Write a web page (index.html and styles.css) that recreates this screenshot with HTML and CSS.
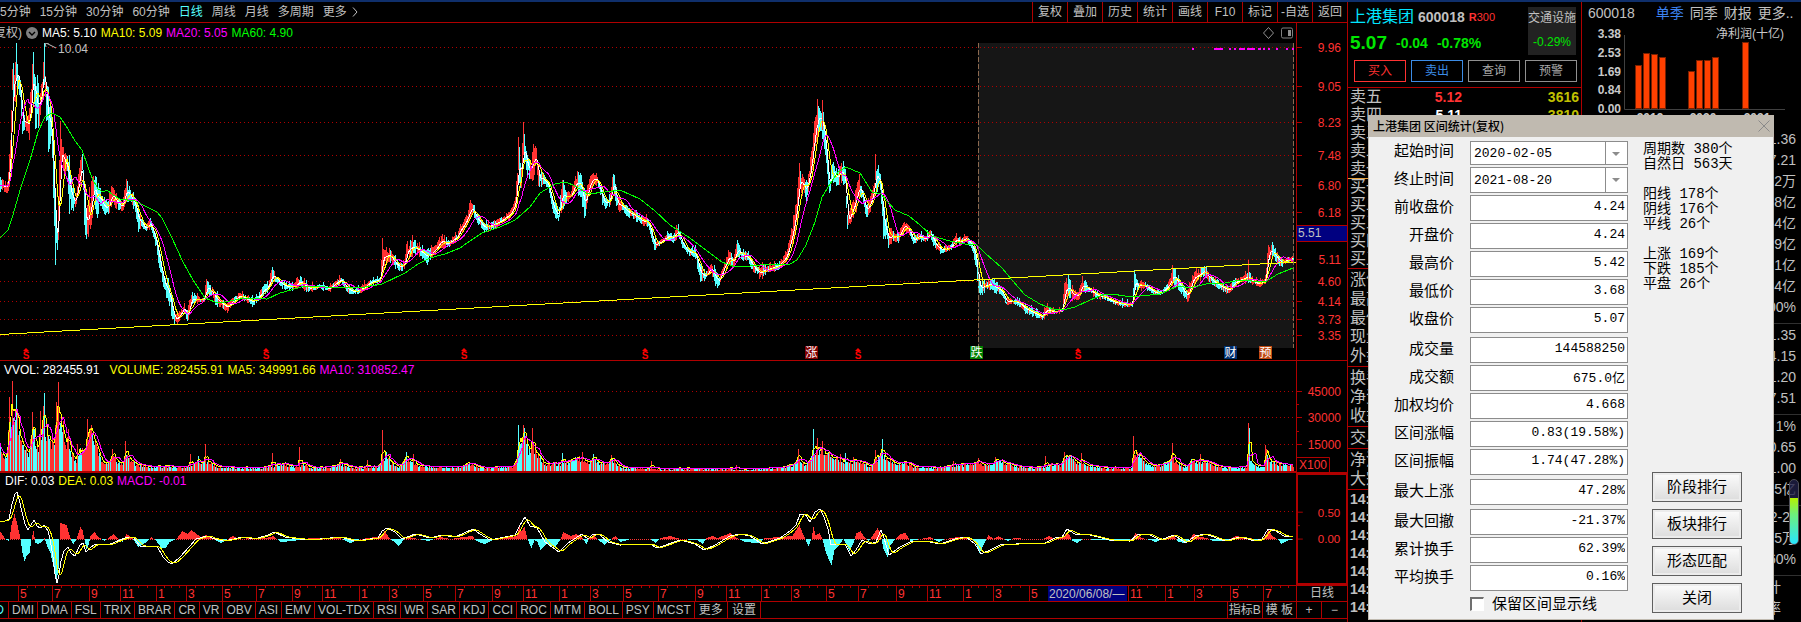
FILE: index.html
```html
<!DOCTYPE html>
<html lang="zh-CN">
  <head>
    <meta charset="UTF-8" />
    <meta name="viewport" content="width=device-width, initial-scale=1.0" />
    <title>上港集团 600018</title>
    <link rel="stylesheet" href="styles.css">
  </head>
  <body>
    <div class="app">
      <!-- Left: charts -->
      <main class="charts">
        <div class="toolbar">
          <nav class="periods">
            <a href="#">5分钟</a>
            <a href="#">15分钟</a>
            <a href="#">30分钟</a>
            <a href="#">60分钟</a>
            <a href="#" class="active">日线</a>
            <a href="#">周线</a>
            <a href="#">月线</a>
            <a href="#">多周期</a>
            <a href="#">更多</a>
            <svg width="6" height="10" viewBox="0 0 6 10"><path d="M1 0.5L5 5L1 9.5" fill="none" stroke="#c0c0c0" /></svg>
          </nav>
          <div class="actions">
            <button>复权</button>
            <button>叠加</button>
            <button>历史</button>
            <button>统计</button>
            <button>画线</button>
            <button>F10</button>
            <button>标记</button>
            <button>-自选</button>
            <button>返回</button>
          </div>
        </div>

        <section class="panel">
          <div class="plot">
            <div class="legend price-legend">
              <span class="cut">复权)</span>
              <svg class="chevron" width="12" height="12" viewBox="0 0 12 12"><circle cx="6" cy="6" r="6" fill="#808080" /><path d="M3 5L6 8L9 5" fill="none" stroke="#000" stroke-width="1.4" /></svg>
              <span class="white">MA5: 5.10</span>
              <span class="yellow">MA10: 5.09</span>
              <span class="magenta">MA20: 5.05</span>
              <span class="green">MA60: 4.90</span>
              <svg class="tools" width="30" height="12" viewBox="0 0 30 12"><path d="M5.500 0.500L10.500 6L5.500 11.500L0.500 6Z" fill="none" stroke="#909090" /><rect x="18.500" y="1" width="11" height="10" rx="1.500" fill="none" stroke="#808080" /><rect x="25" y="3" width="3" height="6" fill="#909090" /></svg>
            </div>
            <svg id="price" class="price-svg" viewBox="0 43 1296 317" preserveAspectRatio="none"></svg>
          </div>
          <svg class="axis axis-price" viewBox="1297 23 50 337" id="priceAxis"></svg>
        </section>

        <section class="panel">
          <div class="plot">
            <div class="legend vol-legend">
              <span class="white wide">VVOL: 282455.91</span>
              <span class="yellow">VOLUME: 282455.91</span>
              <span class="yellow">MA5: 349991.66</span>
              <span class="magenta">MA10: 310852.47</span>
            </div>
            <svg id="volume" class="vol-svg" viewBox="0 379 1296 93" preserveAspectRatio="none"></svg>
          </div>
          <svg class="axis axis-vol" viewBox="1297 361 50 111" id="volAxis"></svg>
        </section>

        <section class="panel">
          <div class="plot">
            <div class="legend macd-legend">
              <span class="white">DIF: 0.03</span>
              <span class="yellow">DEA: 0.03</span>
              <span class="magenta">MACD: -0.01</span>
            </div>
            <svg id="macd" class="macd-svg" viewBox="0 489 1296 96" preserveAspectRatio="none"></svg>
          </div>
          <svg class="axis axis-macd" viewBox="1297 473 50 112" id="macdAxis"></svg>
        </section>

        <div class="dates">
          <svg id="dates" class="dates-svg" viewBox="0 586 1296 15" preserveAspectRatio="none"></svg>
          <button class="cycle">日线</button>
        </div>

        <div class="indicators">
          <button class="first active">MACD</button>
          <button>DMI</button>
          <button>DMA</button>
          <button>FSL</button>
          <button>TRIX</button>
          <button>BRAR</button>
          <button>CR</button>
          <button>VR</button>
          <button>OBV</button>
          <button>ASI</button>
          <button>EMV</button>
          <button>VOL-TDX</button>
          <button>RSI</button>
          <button>WR</button>
          <button>SAR</button>
          <button>KDJ</button>
          <button>CCI</button>
          <button>ROC</button>
          <button>MTM</button>
          <button>BOLL</button>
          <button>PSY</button>
          <button>MCST</button>
          <button class="more">更多</button>
          <button class="more">设置</button>
          <button class="push">指标B</button>
          <button>模 板</button>
          <button class="zoom">+</button>
          <button class="zoom">−</button>
        </div>
      </main>

      <!-- Middle: quote -->
      <aside class="quote">
        <div class="quote-head">
          <div>
            <div class="name-row">
              <span class="name">上港集团</span>
              <b>600018</b>
              <span class="tag"><b>R</b>300</span>
            </div>
            <div class="price-row">
              <span class="last">5.07</span>
              <span>-0.04</span>
              <span>-0.78%</span>
            </div>
          </div>
          <div class="sector">
            <span>交通设施</span>
            <span class="down">-0.29%</span>
          </div>
        </div>
        <div class="trade">
          <button class="buy">买入</button>
          <button class="sell">卖出</button>
          <button>查询</button>
          <button>预警</button>
        </div>
        <table class="book">
          <tbody>
            <tr><th>卖五</th><td class="up">5.12</td><td class="qty">3616</td></tr>
            <tr><th>卖四</th><td>5.11</td><td class="qty">3810</td></tr>
            <tr><th>卖三</th><td></td><td></td></tr>
            <tr><th>卖二</th><td></td><td></td></tr>
            <tr><th>卖一</th><td></td><td></td></tr>
          </tbody>
          <tbody class="bids">
            <tr><th>买一</th><td></td><td></td></tr>
            <tr><th>买二</th><td></td><td></td></tr>
            <tr><th>买三</th><td></td><td></td></tr>
            <tr><th>买四</th><td></td><td></td></tr>
            <tr><th>买五</th><td></td><td></td></tr>
          </tbody>
        </table>
        <ul class="facts">
          <li>涨停</li>
          <li>最高</li>
          <li>最低</li>
          <li>现量</li>
          <li>外盘</li>
        </ul>
        <ul class="facts">
          <li>换手</li>
          <li>净资</li>
          <li>收益</li>
        </ul>
        <ul class="facts">
          <li>交易</li>
        </ul>
        <ul class="facts">
          <li>净流</li>
          <li>大宗</li>
        </ul>
        <ul class="ticks">
          <li>14:5</li>
          <li>14:5</li>
          <li>14:5</li>
          <li>14:5</li>
          <li>14:5</li>
          <li>14:5</li>
          <li>14:5</li>
        </ul>
      </aside>

      <!-- Right: financials -->
      <aside class="finance">
        <div class="finance-tabs">
          <span>600018</span>
          <a href="#" class="active">单季</a>
          <a href="#">同季</a>
          <a href="#">财报</a>
          <a href="#">更多..</a>
        </div>
        <svg class="profit" viewBox="1582 24 219 104">
          <g fill="#c8c8c8" font-size="12" font-weight="bold" text-anchor="end">
            <text x="1621" y="38">3.38</text>
            <text x="1621" y="57">2.53</text>
            <text x="1621" y="76">1.69</text>
            <text x="1621" y="94">0.84</text>
            <text x="1621" y="113">0.00</text>
          </g>
          <text x="1784" y="38" fill="#c8c8c8" font-size="12" text-anchor="end">净利润(十亿)</text>
          <path d="M1624.500 35V109.500H1785" fill="none" stroke="#404040" />
          <g fill="#ff4000" stroke="#7a2000" stroke-width="1">
            <rect x="1635.500" y="65.500" width="6" height="43" />
            <rect x="1643.500" y="53.500" width="6" height="55" />
            <rect x="1651.500" y="54.500" width="6" height="54" />
            <rect x="1659.500" y="57.500" width="6" height="51" />
            <rect x="1688.500" y="71.500" width="6" height="37" />
            <rect x="1696.500" y="60.500" width="6" height="48" />
            <rect x="1704.500" y="60.500" width="6" height="48" />
            <rect x="1712.500" y="57.500" width="6" height="51" />
            <rect x="1742.500" y="42.500" width="6" height="66" />
          </g>
          <g fill="#c8c8c8" font-size="12" font-weight="bold" text-anchor="middle">
            <text x="1650" y="122">2019</text>
            <text x="1703" y="122">2020</text>
            <text x="1757" y="122">2021</text>
          </g>
        </svg>
        <ul class="values">
          <li>1.36</li>
          <li>7.21</li>
          <li>2万</li>
          <li>8亿</li>
          <li>4亿</li>
          <li>9亿</li>
          <li>1亿</li>
          <li>4亿</li>
          <li>00%</li>
        </ul>
        <ul class="values">
          <li>1.35</li>
          <li>4.15</li>
          <li>1.20</li>
          <li>7.51</li>
        </ul>
        <ul class="values">
          <li>1%</li>
          <li>0.65</li>
          <li>1.00</li>
          <li>5亿</li>
        </ul>
        <ul class="values">
          <li class="inset">2-2</li>
          <li>5万</li>
          <li>60%</li>
        </ul>
        <ul class="values last-values">
          <li>计</li>
          <li>率</li>
        </ul>
        <div class="meter"></div>
      </aside>

      <!-- Interval statistics window -->
      <form class="dialog">
        <header class="dialog-title">
          <span>上港集团 区间统计(复权)</span>
          <button type="button" aria-label="关闭窗口"><svg width="12" height="12" viewBox="0 0 12 12"><path d="M0.500 0.500L11.500 11.500M11.500 0.500L0.500 11.500" stroke="#8a8a8a" fill="none" /></svg></button>
        </header>
        <div class="dialog-body">
          <div class="fields">
            <div class="group">
              <div class="field date"><label for="f1">起始时间</label><div class="combo"><select id="f1"><option>2020-02-05</option></select></div></div>
              <div class="field"><label for="f2">终止时间</label><div class="combo"><select id="f2"><option>2021-08-20</option></select></div></div>
              <div class="field"><label for="f3">前收盘价</label><input id="f3" value="4.24"></div>
              <div class="field"><label for="f4">开盘价</label><input id="f4" value="4.24"></div>
              <div class="field"><label for="f5">最高价</label><input id="f5" value="5.42"></div>
              <div class="field"><label for="f6">最低价</label><input id="f6" value="3.68"></div>
              <div class="field"><label for="f7">收盘价</label><input id="f7" value="5.07"></div>
            </div>
            <div class="group">
              <div class="field"><label for="f8">成交量</label><input id="f8" value="144588250"></div>
              <div class="field"><label for="f9">成交额</label><input id="f9" value="675.0亿"></div>
              <div class="field"><label for="f10">加权均价</label><input id="f10" value="4.668"></div>
              <div class="field"><label for="f11">区间涨幅</label><input id="f11" value="0.83(19.58%)"></div>
              <div class="field"><label for="f12">区间振幅</label><input id="f12" value="1.74(47.28%)"></div>
            </div>
            <div class="group">
              <div class="field"><label for="f13">最大上涨</label><input id="f13" value="47.28%"></div>
            </div>
            <div class="group">
              <div class="field"><label for="f14">最大回撤</label><input id="f14" value="-21.37%"></div>
              <div class="field"><label for="f15">累计换手</label><input id="f15" value="62.39%"></div>
              <div class="field"><label for="f16">平均换手</label><input id="f16" value="0.16%"></div>
            </div>
            <div class="keep">
              <input type="checkbox" id="keep"><label for="keep">保留区间显示线</label>
            </div>
          </div>
          <div class="side">
            <div class="stats">
              <p>周期数 380个<br>自然日 563天</p>
              <p>阳线 178个<br>阴线 176个<br>平线 26个</p>
              <p>上涨 169个<br>下跌 185个<br>平盘 26个</p>
            </div>
            <div class="dialog-buttons">
              <button type="button">阶段排行</button>
              <button type="button">板块排行</button>
              <button type="button">形态匹配</button>
              <button type="button">关闭</button>
            </div>
          </div>
        </div>
      </form>
    </div>
    <script src="chart.js"></script>
  </body>
</html>
```
FILE: styles.css
```css
* {
  box-sizing: border-box;
}

body {
  margin: 0;
  background: #000;
  color: #c0c0c0;
  font: 12px/16px "Liberation Sans", "Noto Sans CJK SC", sans-serif;
}

button {
  font: inherit;
  color: inherit;
  background: none;
  border: 0;
  padding: 0;
  white-space: nowrap;
}

a {
  color: inherit;
  text-decoration: none;
}

ul {
  list-style: none;
  margin: 0;
  padding: 0;
}

svg {
  display: block;
}

svg text {
  font-family: "Liberation Sans", "Noto Sans CJK SC", sans-serif;
}

.white { color: #fff; }
.yellow { color: #ff0; }
.magenta { color: #f0f; }
.green { color: #0f0; }

.app {
  position: relative;
  display: grid;
  grid-template-columns: minmax(0, 1fr) 234px 219px;
  min-height: 100vh;
  border-top: 2px solid #0f2f6b;
  overflow: hidden;
}

/* ===== charts ===== */
.charts {
  border-right: 1px solid #b00000;
}

.toolbar {
  display: flex;
  justify-content: space-between;
  height: 21px;
  border-bottom: 1px solid #b00000;
}

.periods {
  display: flex;
  align-items: center;
  gap: 9px;
}

.periods svg {
  margin-left: -4px;
}

.periods .active {
  color: #5ff;
}

.actions {
  display: flex;
}

.actions button {
  width: 35px;
  border-left: 1px solid #b00000;
}

.panel {
  display: grid;
  grid-template-columns: minmax(0, 1fr) 51px;
  border-bottom: 1px solid #b00000;
}

.plot svg[id] {
  width: 100%;
}

.legend {
  display: flex;
  align-items: center;
  gap: 4px;
  white-space: nowrap;
}

.price-legend {
  height: 20px;
}

.cut {
  display: flex;
  justify-content: flex-end;
  width: 22px;
  overflow: hidden;
}

.tools {
  margin-left: auto;
  margin-right: 3px;
}

.vol-legend {
  height: 18px;
  padding-left: 4px;
}

.wide {
  margin-right: 6px;
}

.macd-legend {
  height: 16px;
  padding-left: 5px;
}

.price-svg { height: 317px; }
.vol-svg { height: 93px; }
.macd-svg { height: 96px; }

.axis {
  width: 51px;
  height: 100%;
  border-left: 1px solid #b00000;
}

.axis-macd {
  border: 2px solid #b00000;
  border-right-width: 1px;
}

.dates {
  display: grid;
  grid-template-columns: minmax(0, 1fr) 51px;
  height: 16px;
  border-bottom: 1px solid #b00000;
}

.dates-svg {
  width: 100%;
  height: 15px;
}

.cycle {
  border-left: 1px solid #b00000;
  line-height: 15px;
}

.indicators {
  display: flex;
  height: 17px;
  border-bottom: 1px solid #b00000;
}

.indicators button {
  padding: 0 3px;
  border-right: 1px solid #b00000;
}

.indicators .more {
  padding: 0 4px;
}

.indicators .first {
  display: flex;
  justify-content: flex-end;
  width: 9px;
  padding: 0 4px 0 0;
  overflow: hidden;
}

.indicators .active {
  color: #5ff;
}

.indicators .push {
  margin-left: auto;
  padding: 0 1px;
  border-left: 1px solid #b00000;
}

.indicators .zoom {
  width: 25px;
}

.indicators .zoom:last-child {
  border-right: 0;
}

/* ===== quote ===== */
.quote {
  border-right: 1px solid #b00000;
}

.quote-head {
  display: flex;
  justify-content: space-between;
  padding: 5px 5px 0 2px;
  white-space: nowrap;
}

.name-row {
  display: flex;
  align-items: center;
  gap: 4px;
  height: 20px;
}

.name {
  color: #00e5ff;
  font-size: 16px;
}

.name-row b {
  font-size: 14px;
}

.name-row .tag,
.tag b {
  color: #ff3232;
  font-size: 11px;
}

.price-row {
  display: flex;
  align-items: center;
  gap: 9px;
  height: 32px;
  color: #00e600;
  font-size: 14px;
  font-weight: bold;
}

.last {
  font-size: 19px;
}

.sector {
  display: flex;
  flex-direction: column;
  gap: 8px;
  height: 48px;
  padding-top: 3px;
  background: #222;
  text-align: center;
}

.down {
  color: #00e600;
}

.trade {
  display: flex;
  gap: 5px;
  padding: 1px 4px 5px 6px;
  border-bottom: 1px solid #b00000;
}

.trade button {
  flex: 1;
  height: 22px;
  border: 1px solid #909090;
  color: #a8a8a8;
  line-height: 18px;
}

.trade .buy {
  color: #ff3232;
  border-color: #ff3232;
}

.trade .sell {
  color: #3c8ce6;
  border-color: #3c8ce6;
}

.book {
  width: 100%;
  border-collapse: collapse;
  border-bottom: 1px solid #b00000;
  font-size: 14px;
  font-weight: bold;
  color: #fff;
}

.book tr {
  height: 18px;
}

.book th {
  width: 60px;
  padding: 0 0 0 2px;
  color: #c0c0c0;
  font-size: 16px;
  font-weight: normal;
  text-align: left;
}

.book td {
  padding: 0 2px 0 0;
  text-align: right;
}

.book .up {
  color: #ff3232;
}

.book td:nth-child(2) {
  width: 56px;
}

.book .qty {
  color: #c0c000;
}

.book .bids {
  border-top: 1px solid #e6a03c;
}

.facts {
  padding: 1px 0 1px 2px;
  border-bottom: 1px solid #b00000;
  font-size: 16px;
  line-height: 19px;
}

.ticks {
  padding-left: 2px;
  font-size: 14px;
  font-weight: bold;
  line-height: 18px;
}

/* ===== finance ===== */
.finance {
  position: relative;
}

.finance-tabs {
  display: flex;
  align-items: center;
  gap: 6px;
  height: 22px;
  padding-left: 6px;
  font-size: 14px;
}

.finance-tabs span {
  margin-right: 15px;
}

.finance-tabs .active {
  color: #3c82f0;
}

.profit {
  width: 219px;
  height: 104px;
}

.values {
  padding: 1px 5px 5px 0;
  border-bottom: 1px solid #303030;
  font-size: 14px;
  line-height: 21px;
  text-align: right;
}

.values .inset {
  padding-right: 6px;
}

.last-values {
  padding-right: 20px;
  border-bottom: 0;
}

/* floating level meter on the right edge */
.meter {
  position: absolute;
  right: 2px;
  top: 477px;
  width: 10px;
  height: 66px;
  border: 1px solid #50505a;
  border-radius: 5px;
  background: linear-gradient(rgba(32, 32, 72, 0.8) 18px, #b4f000 18px, #6ff07a 34px, #28e6ff);
}

/* ===== dialog ===== */
.dialog {
  position: absolute;
  top: 113px;
  right: 27px;
  width: 406px;
  padding-bottom: 6px;
  border: 1px solid #c0bab0;
  border-top: 0;
  background: #f0f0f0;
  color: #000;
  font-size: 15px;
}

.dialog-title {
  display: flex;
  align-items: center;
  justify-content: space-between;
  height: 22px;
  padding: 0 3px 0 4px;
  background: #c0bab0;
  font-size: 12px;
  font-weight: 600;
}

.dialog-title span {
  font-family: "Noto Sans CJK SC", sans-serif;
  font-weight: 500;
}

.dialog-body {
  display: grid;
  grid-template-columns: 259px 1fr;
  padding-top: 4px;
}

.fields,
.group {
  display: flex;
  flex-direction: column;
}

.fields {
  gap: 4px;
}

.group {
  gap: 2px;
}

.field {
  display: grid;
  grid-template-columns: 84px 158px;
  justify-content: end;
  column-gap: 16px;
  height: 26px;
}

.field.date {
  height: 24px;
}

.field label {
  line-height: 24px;
  text-align: right;
  white-space: nowrap;
}

.field.date label {
  line-height: 20px;
}

.field input,
.field select {
  width: 100%;
  height: 100%;
  margin: 0;
  padding: 0 2px 3px;
  border: 1px solid #8c8c8c;
  border-radius: 0;
  background: #fff;
  color: #000;
  font: 13px "Liberation Mono", "Noto Sans CJK SC", monospace;
  text-align: right;
}

.combo {
  position: relative;
}

.field select {
  appearance: none;
  padding: 0 0 0 3px;
  text-align: left;
}

.combo:before {
  content: "";
  position: absolute;
  top: 1px;
  bottom: 1px;
  right: 22px;
  width: 1px;
  background: #8c8c8c;
}

.combo:after {
  content: "";
  position: absolute;
  right: 8px;
  top: 11px;
  border: 4px solid transparent;
  border-top-color: #8c8c8c;
  border-bottom: 0;
}

.keep {
  display: flex;
  align-items: center;
  gap: 8px;
  height: 18px;
  padding-left: 101px;
}

.keep input {
  appearance: none;
  width: 14px;
  height: 14px;
  margin: 0;
  border: 1px solid #fff;
  border-top: 2px solid #707070;
  border-left: 2px solid #707070;
  background: #fff;
}

.side {
  display: flex;
  flex-direction: column;
  justify-content: space-between;
  padding-left: 15px;
}

.stats {
  padding-top: 1px;
  font-family: "Liberation Mono", "Noto Sans CJK SC", monospace;
  line-height: 15px;
}

.stats p {
  margin: 0 0 15px;
  font-size: 14px;
}

.dialog-buttons {
  display: flex;
  flex-direction: column;
  gap: 7px;
  width: 90px;
  margin-left: 9px;
}

.dialog-buttons button {
  height: 30px;
  border: 1px solid #606060;
  background: linear-gradient(#fcfcfc, #dcdcdc);
  box-shadow: inset 0 0 0 2px #ececec;
}
```
FILE: chart.js
```js
const NS = 'http://www.w3.org/2000/svg';
const LINE = '#b00000';
const UP = '#ff3232';
const DOWN = '#54ffff';
const END = 1294;

function add(parent, tag, attrs, text) {
  const el = document.createElementNS(NS, tag);
  for (const key in attrs) el.setAttribute(key, attrs[key]);
  if (text !== undefined) el.textContent = text;
  parent.appendChild(el);
  return el;
}

const $ = (id) => document.getElementById(id);

// small fixed generator, the bars look the same on each load
let seed = 7;
function rnd() {
  seed = (seed * 16807) % 2147483647;
  return seed / 2147483647;
}

function parse(str) {
  return str.trim().split(/\s+/).map((s) => s.split(',').map(Number));
}

function spread(points, col) {
  const out = [];
  let i = 0;
  for (let x = 0; x < END; x++) {
    while (i < points.length - 2 && points[i + 1][0] <= x) i++;
    const a = points[i];
    const b = points[i + 1];
    const t = Math.min(1, (x - a[0]) / (b[0] - a[0]));
    out.push(a[col] + (b[col] - a[col]) * t);
  }
  return out;
}

function average(values, n) {
  return values.map((v, i) => {
    const part = values.slice(Math.max(0, i - n + 1), i + 1);
    return part.reduce((s, p) => s + p, 0) / part.length;
  });
}

function line(svg, values, color) {
  const d = values.map((v, x) => (x ? 'L' : 'M') + x + ' ' + v.toFixed(1)).join('');
  add(svg, 'path', { d: d, fill: 'none', stroke: color, 'shape-rendering': 'crispEdges' });
}

function grid(svg, rows) {
  rows.forEach((y) => add(svg, 'path', {
    d: 'M0 ' + (y + 0.5) + 'H1294', stroke: LINE, 'stroke-dasharray': '1 3', 'shape-rendering': 'crispEdges'
  }));
}

function bars(svg, list) {
  const d = { [UP]: '', [DOWN]: '' };
  list.forEach((b) => { d[b[3]] += 'M' + (b[0] + 0.5) + ' ' + b[1].toFixed(1) + 'V' + b[2].toFixed(1); });
  for (const color in d) add(svg, 'path', { d: d[color], stroke: color, 'shape-rendering': 'crispEdges' });
}

// x, high, low
const range = parse(`
0,176,194 3,180,192 7,182,193 9,150,190 11,100,170 12,56,92 14,72,120 16,43,84 18,75,90 20,76,100 22,105,139
24,110,133 27,115,132 29,108,141 31,75,118 33,52,86 35,76,134 37,78,120 39,88,133 41,78,105 43,62,92 44,43,85
46,84,125 48,86,152 51,108,140 53,140,200 55,200,266 57,228,251 58,196,246 60,121,190 62,140,165 64,151,175
67,156,172 69,150,222 72,183,212 75,196,210 79,165,190 82,153,175 84,185,225 86,205,250 88,190,240 91,180,238
93,172,200 97,178,218 100,190,205 104,200,215 108,200,214 112,183,206 118,198,210 122,202,212 126,178,202
130,190,202 135,198,212 138,205,235 141,218,226 145,225,233 150,218,228 156,235,248 159,250,270 162,265,282
165,275,298 168,280,300 171,290,318 174,312,325 178,314,322 184,303,312 187,310,325 191,290,308 196,295,303
204,298,302 206,278,295 210,285,295 215,290,305 220,298,307 227,302,313 233,297,304 240,292,299 246,295,303
253,298,306 258,294,301 262,286,298 268,283,290 272,266,284 276,275,282 280,280,286 285,282,290 293,284,290
300,276,287 308,285,292 318,284,289 329,286,291 336,280,286 341,276,283 347,285,293 354,289,295 362,284,293
370,280,285 380,278,282 382,238,278 385,250,264 389,248,262 395,258,268 399,262,272 404,260,270 407,240,262
413,238,255 420,246,256 427,250,264 434,246,256 441,234,248 447,240,248 454,235,243 457,234,240 460,224,236
465,216,230 470,203,218 472,202,214 476,213,222 484,223,232 490,222,230 500,217,226 510,210,218 515,197,212
517,165,200 518,133,185 521,165,190 523,122,165 526,150,175 530,160,182 533,143,180 536,147,165 538,168,188
543,173,185 548,182,188 553,200,215 558,210,222 562,178,210 565,188,205 570,193,200 576,175,190 581,170,200
584,190,222 588,178,200 592,172,186 597,176,184 602,190,205 605,198,210 610,193,206 613,171,190 617,195,213
622,202,210 627,206,217 635,212,220 642,215,227 648,218,227 654,240,250 660,240,245 667,233,240 673,232,243
678,224,238 682,240,248 688,248,256 695,248,258 700,264,283 705,272,280 711,264,272 716,270,289 719,276,286
723,266,272 729,247,266 733,257,268 737,240,258 742,252,260 747,250,262 753,262,272 760,268,279 763,264,277
770,265,272 778,262,270 786,252,262 791,230,248 796,195,230 799,165,198 801,168,195 806,180,202 811,150,180
814,120,155 817,99,140 819,105,130 822,100,140 825,130,155 829,180,198 832,160,180 837,172,186 840,160,182
845,166,185 847,215,230 851,205,222 855,190,215 859,174,198 862,190,200 866,205,217 870,196,212 874,182,195
875,154,195 880,172,190 883,200,240 888,230,248 892,230,242 898,232,243 904,220,230 909,226,236 913,236,245
919,232,240 925,236,242 930,228,238 936,240,252 942,247,253 950,244,251 956,234,245 960,238,246 966,234,242
972,243,250 976,250,268 978,268,295 980,280,296 985,282,290 990,278,290 995,280,294 1002,288,296 1006,298,306
1010,298,304 1018,300,305 1026,305,314 1034,310,316 1042,314,320 1046,305,315 1055,310,314 1062,308,312
1064,280,306 1068,275,298 1072,288,300 1078,292,300 1082,278,292 1088,286,292 1096,292,298 1105,295,300
1115,300,305 1125,302,307 1132,302,307 1134,270,290 1137,282,290 1143,280,290 1149,285,292 1155,290,296
1162,290,294 1168,282,290 1173,266,285 1178,275,290 1184,288,297 1187,290,302 1190,280,295 1193,272,285
1200,268,280 1204,266,276 1210,274,284 1218,282,288 1228,287,294 1234,278,288 1242,276,282 1248,272,282
1252,278,284 1258,281,287 1265,278,284 1268,245,260 1272,245,258 1276,252,262 1281,258,268 1286,257,263
1293,255,262`);

const ma60 = parse(`
0,238 8,230 13,215 20,190 30,160 38,132 45,117 52,113 60,117 68,129 75,141 82,150 92,178 98,189 103,192 107,190
113,195 120,199 135,201 145,206 157,212 162,218 172,238 183,262 193,280 205,298 215,302 225,302 235,300 245,298
267,299 280,293 305,286 325,287 365,287 382,284 405,273 418,264 430,258 445,254 460,248 467,243 482,233 500,227
515,220 530,207 540,193 555,184 566,182 575,186 588,194 605,192 620,190 640,199 655,211 670,225 690,238 710,253
722,262 735,267 750,266 770,264 790,264 797,260 806,245 815,222 822,197 830,184 838,172 846,167 860,173 872,192
881,194 895,210 909,216 920,225 932,236 950,241 965,244 977,245 985,253 1002,268 1012,280 1025,295 1040,304
1053,309 1063,310 1075,307 1090,300 1105,294 1113,294 1130,297 1160,294 1178,286 1190,288 1210,283 1225,283
1240,280 1265,282 1278,274 1293,268`);

function drawPrice() {
  const svg = $('price');
  add(svg, 'rect', { x: 978, y: 43, width: 316, height: 305, fill: '#161616' });
  grid(svg, [47, 86, 122, 155, 185, 212, 236, 259, 281, 301, 319, 335]);

  const hi = spread(range, 1);
  const lo = spread(range, 2);
  const mid = hi.map((h, i) => (h + lo[i]) / 2);
  // colours come in short runs, with a bias from the slope
  let up = true;
  const list = hi.map((h, i) => {
    const span = lo[i] - h;
    const slope = mid[Math.min(END - 1, i + 1)] - mid[Math.max(0, i - 1)];
    if (rnd() < 0.55) up = slope + (rnd() - 0.5) * 9 < 0;
    const wick = rnd() < 0.2 ? 3 : 0;
    return [i, h + rnd() * rnd() * span * 0.5 - wick, lo[i] - rnd() * rnd() * span * 0.5 + wick / 2, up ? UP : DOWN];
  });
  bars(svg, list);
  line(svg, average(mid, 4), '#fff');
  line(svg, average(mid, 8), '#ff0');
  line(svg, average(mid, 17), '#f0f');
  bars(svg, [[16, 43, 78, DOWN], [33, 52, 84, DOWN], [44, 43, 85, DOWN], [55, 210, 265, DOWN], [60, 121, 170, UP],
    [523, 122, 152, UP], [817, 99, 125, UP], [822, 100, 130, UP], [875, 154, 180, UP], [1134, 271, 290, DOWN],
    [1172, 265, 282, UP], [1248, 260, 280, UP], [1273, 245, 255, DOWN]]);
  line(svg, spread(ma60, 1), '#0f0');
  add(svg, 'path', { d: 'M0 334.5L1296 262', stroke: '#ff0', 'shape-rendering': 'crispEdges' });
  add(svg, 'path', { d: 'M978.5 43V348M1293.5 43V348', stroke: '#8c6a50', 'stroke-dasharray': '5 2' });

  // limit marks
  add(svg, 'path', {
    d: 'M1192 49H1194M1214 49H1223M1229 49H1231M1234 49H1236M1239 49H1245M1247 49H1255M1258 49H1261M1263 49H1265M1268 49H1270M1276 49H1278M1286 49H1288M1292 49H1294',
    stroke: '#f0f', 'stroke-width': 2, 'shape-rendering': 'crispEdges'
  });
  add(svg, 'path', { d: 'M46 47L45 43L49 43M46 43L56 48', fill: 'none', stroke: '#c0c0c0' });
  add(svg, 'text', { x: 58, y: 53, 'font-size': 12, fill: '#c0c0c0' }, '10.04');

  [26, 266, 464, 645, 858, 1078].forEach((x) => {
    add(svg, 'path', { d: 'M' + (x - 3) + ' 351L' + x + ' 348L' + (x + 3) + ' 351Z', fill: '#f00' });
    add(svg, 'text', { x: x, y: 359, 'font-size': 10, 'font-weight': 'bold', 'text-anchor': 'middle', fill: '#f00' }, 'S');
  });
  [[805, '#800000', '涨'], [970, '#008000', '跌'], [1224, '#003070', '财'], [1259, '#c04810', '预']].forEach((b) => {
    add(svg, 'rect', { x: b[0], y: 346, width: 13, height: 13, fill: b[1] });
    add(svg, 'text', { x: b[0] + 0.5, y: 357, 'font-size': 12, fill: '#fff' }, b[2]);
  });
}

const volume = parse(`
0,30 3,16 6,18 9,45 12,60 16,62 19,40 22,24 28,19 32,38 35,36 38,24 42,42 46,45 50,28 54,36 57,60 61,58 64,38
67,30 70,18 76,11 80,20 84,22 87,42 91,38 95,28 99,16 105,7 114,16 120,7 127,16 132,9 140,6 150,4 185,4 190,6
198,9 205,9 209,10 215,5 230,3 260,3 272,5 277,5 284,8 290,4 300,6 303,7 310,3 330,4 340,7 355,3 378,4 382,14
386,18 390,9 398,4 406,14 413,10 418,5 430,4 460,4 468,8 480,3 512,4 518,20 523,34 528,24 533,26 538,18 542,9
548,8 560,8 568,9 575,13 582,14 588,9 593,13 600,8 605,8 613,12 618,5 625,3 660,2 730,2 745,1 780,3 793,7
798,14 803,7 810,12 814,22 820,24 828,18 835,16 840,9 850,11 862,9 870,4 876,12 882,18 885,13 895,8 905,9
915,4 940,3 952,6 965,7 978,9 985,6 996,10 1008,8 1020,4 1040,3 1050,7 1060,5 1066,16 1072,13 1076,8 1081,10
1086,6 1095,4 1110,3 1131,3 1134,19 1138,17 1145,9 1155,5 1165,8 1172,15 1178,7 1185,4 1190,12 1203,11 1215,5
1228,3 1246,4 1248,20 1251,10 1256,5 1264,4 1267,18 1270,11 1280,7 1293,6`);
const spikes = parse(`
9,74,1 12,90,1 16,76,0 32,59,1 40,60,1 43,65,1 44,78,0 56,69,1 58,89,1 68,42,1 87,52,1 91,46,1 77,27,1 112,22,1 125,30,1
190,17,1 198,15,0 205,27,1 272,18,1 299,24,1 340,12,1 367,11,1 382,41,1 406,19,0 413,17,1 518,46,0 523,46,1
524,43,0 532,43,1 562,18,0 582,19,1 593,17,0 611,16,1 651,10,1 736,6,1 798,22,1 813,42,0 817,33,1 822,30,1 840,17,1
845,18,0 853,14,1 875,21,1 882,32,0 890,14,1 953,10,1 978,13,1 995,14,1 1045,15,1 1064,19,1 1081,18,1 1133,35,1
1172,28,1 1200,17,1 1248,48,1 1249,43,0 1265,26,1 1266,22,1`);

function drawVolume() {
  const svg = $('volume');
  grid(svg, [391, 417, 444]);
  const base = spread(volume, 1);
  const list = base.map((v, x) => [x, 471 - Math.max(1, v * (0.65 + rnd() * 0.5)), 471, rnd() > 0.5 ? UP : DOWN]);
  spikes.forEach((s) => { list[s[0]][1] = 471 - s[1]; list[s[0]][3] = s[2] ? UP : DOWN; });
  bars(svg, list);
  const top = list.map((b) => b[1]);
  line(svg, average(top, 4).map((v) => v - 1), '#ff0');
  line(svg, average(top, 9).map((v) => v - 1), '#f0f');
  add(svg, 'path', { d: 'M0 471.5H1296', stroke: LINE });
}

const dif = parse(`
0,18 5,18 9,20 12,35 15,45 17,47 19,40 22,27 25,15 28,9 31,14 34,19 37,13 40,11 44,14 48,8 50,0 53,-18 55,-35
57,-44 59,-36 61,-22 64,-12 68,-8 71,-14 75,-17 80,-6 83,-4 86,-13 90,-9 95,-5 108,-6 115,-3 125,1 133,2 140,-7
150,-7 157,-7 163,-18 168,-23 172,-25 180,-18 190,-7 196,0 207,3 215,0 225,-2 243,2 255,0 268,4 274,7 285,2
300,0 320,0 340,2 355,-2 378,1 382,8 387,11 395,7 402,0 415,5 430,1 442,4 455,2 473,10 480,5 490,-1 515,4
520,14 525,22 530,13 537,11 545,-3 559,-13 568,-4 582,5 588,0 593,5 600,4 608,-3 620,-6 650,-5 657,-9 680,-1
695,-5 704,-11 715,-6 730,3 740,5 750,3 762,-5 780,1 790,8 796,14 800,25 805,25 810,17 815,27 820,30 824,22
828,10 831,-6 836,-5 845,-5 851,-17 856,-11 862,-1 870,-5 876,-3 881,9 884,1 889,-16 900,-8 912,-2 925,-2
940,-5 955,0 966,2 975,-5 981,-15 990,-11 1000,-6 1015,-5 1045,-4 1055,1 1062,2 1067,10 1075,5 1090,4 1110,-1
1130,-2 1138,5 1148,5 1160,-1 1174,4 1186,-4 1195,3 1205,5 1225,-2 1240,2 1255,-2 1262,0 1268,10 1276,8
1284,3 1293,2`);
const hist = parse(`
0,7 5,0 8,-2 9,0 11,14 14,25 17,14 20,0 22,-14 24,-22 26,-17 29,-14 31,0 33,8 35,-4 38,-5 42,-2 44,1 47,-8
50,-14 53,-28 56,-42 58,-30 59,0 60,16 66,14 69,4 71,-2 73,-5 76,0 80,12 82,9 84,0 86,-10 88,-6 90,3 94,7 98,2
104,-2 113,5 117,1 122,-3 126,5 132,1 138,-8 146,-3 151,2 155,-1 161,-9 165,-9 169,-3 176,0 182,8 187,5 191,9
200,2 206,4 212,1 220,-4 226,-1 232,3 240,0 250,1 265,1 273,3 280,-3 292,-2 310,1 340,1 350,-4 360,0 375,2
381,3 384,8 389,1 395,-4 398,-7 404,0 408,2 418,0 428,-2 440,2 450,0 462,2 472,3 476,-2 484,-5 494,0 510,2
516,3 519,12 521,8 524,12 527,0 531,-9 534,-1 537,-3 540,-11 546,-5 555,-8 560,0 563,7 570,3 576,5 582,1
586,-5 588,0 593,4 597,0 604,-6 612,1 615,3 620,-3 630,0 650,0 655,-4 660,1 670,3 680,0 697,-1 702,-5 706,1
712,3 717,1 722,3 730,6 735,2 745,-3 758,-4 764,1 780,2 792,3 799,14 803,4 808,-7 811,0 813,12 815,4 819,6
822,0 825,-12 828,-20 831,-26 834,-11 838,-7 843,0 849,-12 853,-4 856,6 860,8 864,2 868,-2 872,3 877,11 880,6
883,-10 887,-18 890,-6 895,0 900,5 905,6 910,-2 920,0 930,2 938,-3 945,0 957,2 970,0 975,-3 979,-14 983,-6
988,4 993,0 998,3 1007,-2 1013,1 1030,0 1043,0 1048,3 1055,0 1062,1 1066,6 1069,4 1072,-2 1077,-4 1082,0
1100,-1 1120,-2 1132,0 1135,6 1141,1 1150,-1 1155,-3 1165,1 1174,3 1178,-3 1185,-4 1190,1 1193,5 1200,2 1207,1
1213,-2 1225,-2 1235,3 1250,1 1258,-2 1263,0 1268,9 1272,3 1278,-1 1281,-5 1286,-2 1293,0`);

function drawMacd() {
  const svg = $('macd');
  grid(svg, [511]);
  add(svg, 'path', { d: 'M0 539.5H1294', stroke: UP, 'stroke-dasharray': '1 1', 'shape-rendering': 'crispEdges' });
  bars(svg, spread(hist, 1).map((v, x) => [x, 539, 539 - v, v > 0 ? UP : DOWN]));
  const d = spread(dif, 1).map((v) => 539 - v);
  line(svg, d, '#fff');
  line(svg, average(d, 7), '#ff0');
}

function axis(id, labels, ticks) {
  const svg = $(id);
  labels.forEach((l) => {
    if (l[1]) add(svg, 'text', { x: 1341, y: l[0] + 5, 'font-size': 12, 'text-anchor': 'end', fill: UP }, l[1]);
    add(svg, 'path', { d: 'M1297 ' + (l[0] + 0.5) + 'h5', stroke: LINE });
  });
  ticks.forEach((y) => add(svg, 'path', { d: 'M1297 ' + (y + 0.5) + 'h2', stroke: LINE }));
  return svg;
}

function drawAxes() {
  const price = axis('priceAxis', [[47, '9.96'], [86, '9.05'], [122, '8.23'], [155, '7.48'], [185, '6.80'], [212, '6.18'],
    [259, '5.11'], [281, '4.60'], [301, '4.14'], [319, '3.73'], [335, '3.35']], []);
  add(price, 'rect', { x: 1296, y: 225.5, width: 52, height: 16, fill: '#000080', stroke: LINE });
  add(price, 'text', { x: 1298, y: 237, 'font-size': 12, fill: '#c0c0c0' }, '5.51');

  const vol = axis('volAxis', [[391, '45000'], [417, '30000'], [444, '15000']], [404, 431]);
  add(vol, 'path', { d: 'M1297 457.5H1329.5V472', fill: 'none', stroke: LINE });
  add(vol, 'text', { x: 1299, y: 469, 'font-size': 12, fill: UP }, 'X100');

  axis('macdAxis', [[511, '0.50'], [539, '0.00']], [525]);
}

function drawDates() {
  const svg = $('dates');
  const months = parse(`5,18 7,52 9,89 11,120 1,156 3,186 5,222 7,256 9,292 11,322 1,359 3,389 5,423 7,455 9,492
    11,523 1,559 3,590 5,623 7,658 9,695 11,726 1,761 3,791 5,826 7,858 9,896 11,927 1,963 3,993 5,1029 11,1128
    1,1165 3,1194 5,1230 7,1263`);
  months.forEach((m, i) => {
    add(svg, 'path', { d: 'M' + (m[1] + 0.5) + ' 586V601', stroke: LINE });
    add(svg, 'text', { x: m[1] + 2, y: 598, 'font-size': 12, fill: UP }, m[0]);
    const next = i + 1 < months.length ? months[i + 1][1] : 1296;
    for (let k = 1; k < 4; k++) {
      const x = Math.round(m[1] + (next - m[1]) * k / 4) + 0.5;
      add(svg, 'path', { d: 'M' + x + ' 586v2', stroke: LINE });
    }
  });
  add(svg, 'rect', { x: 1048, y: 586, width: 79, height: 15, fill: '#000080' });
  add(svg, 'text', { x: 1049, y: 598, 'font-size': 12, fill: '#c0c0c0' }, '2020/06/08/—');
}

drawPrice();
drawVolume();
drawMacd();
drawAxes();
drawDates();
```
